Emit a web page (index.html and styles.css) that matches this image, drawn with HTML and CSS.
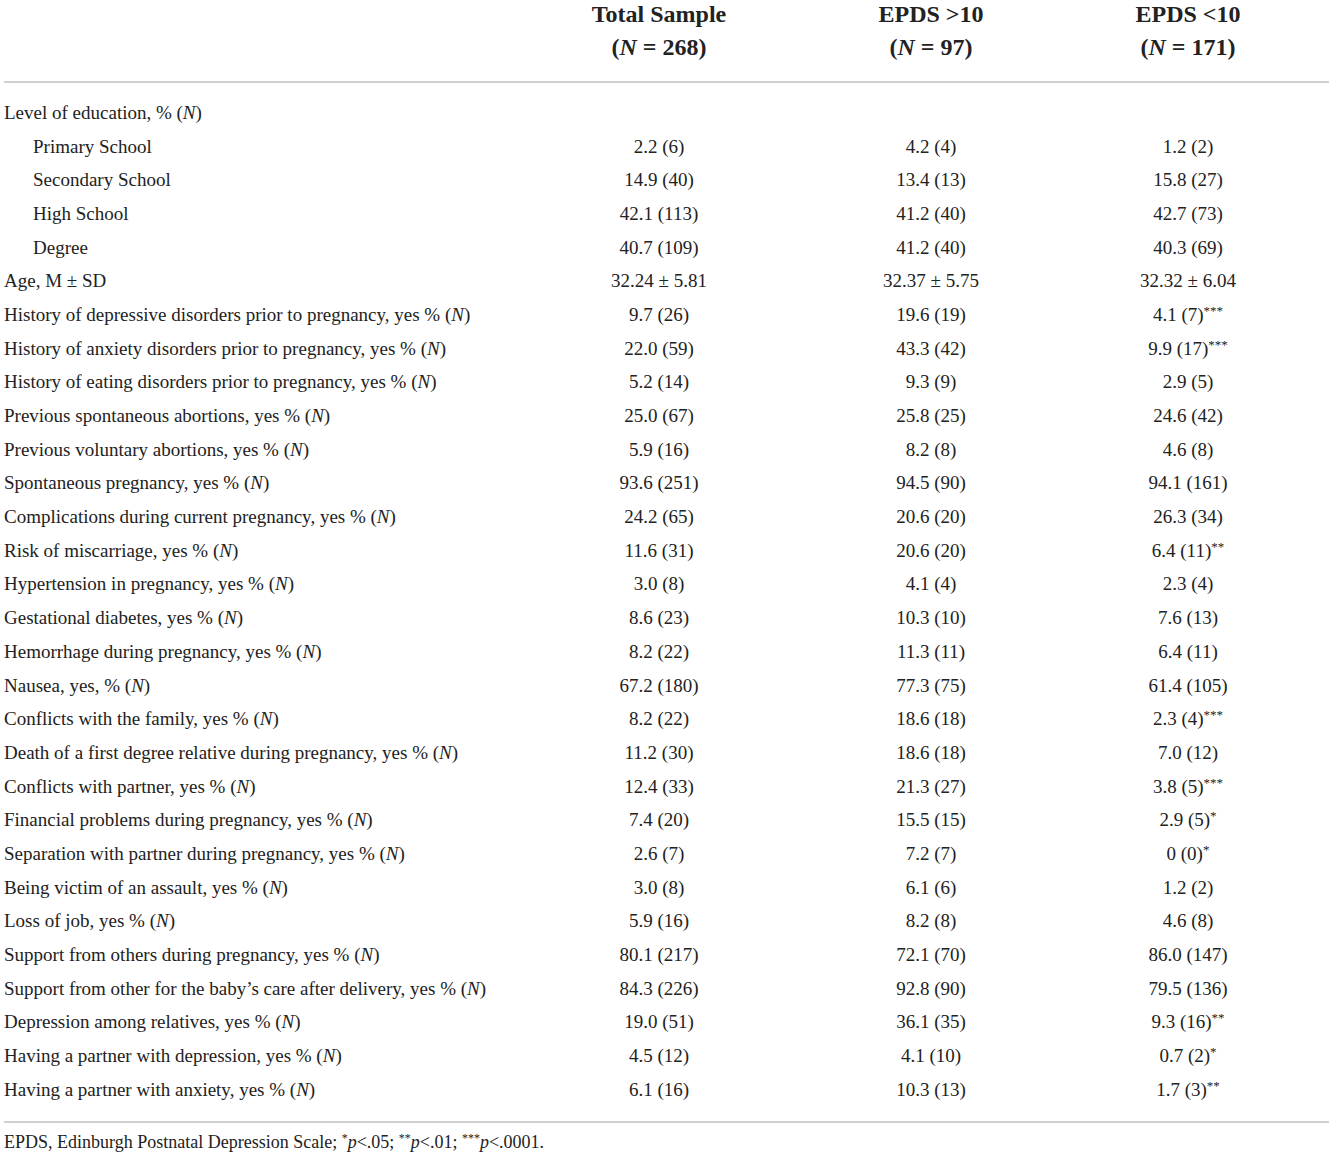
FILE: index.html
```html
<!DOCTYPE html>
<html lang="en">
<head>
  <meta charset="UTF-8">
  <title>Sample characteristics</title>
  <link rel="stylesheet" href="styles.css">
</head>
<body>
  <table class="data-table">
    <colgroup>
      <col class="col-label">
      <col class="col-total">
      <col class="col-high">
      <col class="col-low">
    </colgroup>
    <thead>
      <tr>
        <th></th>
        <th>Total Sample<br>(<i>N</i> = 268)</th>
        <th>EPDS &gt;10<br>(<i>N</i> = 97)</th>
        <th>EPDS &lt;10<br>(<i>N</i> = 171)</th>
      </tr>
    </thead>
    <tbody>
      <tr><td>Level of education, % (<i>N</i>)</td><td></td><td></td><td></td></tr>
      <tr><td class="indent">Primary School</td><td>2.2 (6)</td><td>4.2 (4)</td><td>1.2 (2)</td></tr>
      <tr><td class="indent">Secondary School</td><td>14.9 (40)</td><td>13.4 (13)</td><td>15.8 (27)</td></tr>
      <tr><td class="indent">High School</td><td>42.1 (113)</td><td>41.2 (40)</td><td>42.7 (73)</td></tr>
      <tr><td class="indent">Degree</td><td>40.7 (109)</td><td>41.2 (40)</td><td>40.3 (69)</td></tr>
      <tr><td>Age, M ± SD</td><td>32.24 ± 5.81</td><td>32.37 ± 5.75</td><td>32.32 ± 6.04</td></tr>
      <tr><td>History of depressive disorders prior to pregnancy, yes % (<i>N</i>)</td><td>9.7 (26)</td><td>19.6 (19)</td><td>4.1 (7)<sup>***</sup></td></tr>
      <tr><td>History of anxiety disorders prior to pregnancy, yes % (<i>N</i>)</td><td>22.0 (59)</td><td>43.3 (42)</td><td>9.9 (17)<sup>***</sup></td></tr>
      <tr><td>History of eating disorders prior to pregnancy, yes % (<i>N</i>)</td><td>5.2 (14)</td><td>9.3 (9)</td><td>2.9 (5)</td></tr>
      <tr><td>Previous spontaneous abortions, yes % (<i>N</i>)</td><td>25.0 (67)</td><td>25.8 (25)</td><td>24.6 (42)</td></tr>
      <tr><td>Previous voluntary abortions, yes % (<i>N</i>)</td><td>5.9 (16)</td><td>8.2 (8)</td><td>4.6 (8)</td></tr>
      <tr><td>Spontaneous pregnancy, yes % (<i>N</i>)</td><td>93.6 (251)</td><td>94.5 (90)</td><td>94.1 (161)</td></tr>
      <tr><td>Complications during current pregnancy, yes % (<i>N</i>)</td><td>24.2 (65)</td><td>20.6 (20)</td><td>26.3 (34)</td></tr>
      <tr><td>Risk of miscarriage, yes % (<i>N</i>)</td><td>11.6 (31)</td><td>20.6 (20)</td><td>6.4 (11)<sup>**</sup></td></tr>
      <tr><td>Hypertension in pregnancy, yes % (<i>N</i>)</td><td>3.0 (8)</td><td>4.1 (4)</td><td>2.3 (4)</td></tr>
      <tr><td>Gestational diabetes, yes % (<i>N</i>)</td><td>8.6 (23)</td><td>10.3 (10)</td><td>7.6 (13)</td></tr>
      <tr><td>Hemorrhage during pregnancy, yes % (<i>N</i>)</td><td>8.2 (22)</td><td>11.3 (11)</td><td>6.4 (11)</td></tr>
      <tr><td>Nausea, yes, % (<i>N</i>)</td><td>67.2 (180)</td><td>77.3 (75)</td><td>61.4 (105)</td></tr>
      <tr><td>Conflicts with the family, yes % (<i>N</i>)</td><td>8.2 (22)</td><td>18.6 (18)</td><td>2.3 (4)<sup>***</sup></td></tr>
      <tr><td>Death of a first degree relative during pregnancy, yes % (<i>N</i>)</td><td>11.2 (30)</td><td>18.6 (18)</td><td>7.0 (12)</td></tr>
      <tr><td>Conflicts with partner, yes % (<i>N</i>)</td><td>12.4 (33)</td><td>21.3 (27)</td><td>3.8 (5)<sup>***</sup></td></tr>
      <tr><td>Financial problems during pregnancy, yes % (<i>N</i>)</td><td>7.4 (20)</td><td>15.5 (15)</td><td>2.9 (5)<sup>*</sup></td></tr>
      <tr><td>Separation with partner during pregnancy, yes % (<i>N</i>)</td><td>2.6 (7)</td><td>7.2 (7)</td><td>0 (0)<sup>*</sup></td></tr>
      <tr><td>Being victim of an assault, yes % (<i>N</i>)</td><td>3.0 (8)</td><td>6.1 (6)</td><td>1.2 (2)</td></tr>
      <tr><td>Loss of job, yes % (<i>N</i>)</td><td>5.9 (16)</td><td>8.2 (8)</td><td>4.6 (8)</td></tr>
      <tr><td>Support from others during pregnancy, yes % (<i>N</i>)</td><td>80.1 (217)</td><td>72.1 (70)</td><td>86.0 (147)</td></tr>
      <tr><td>Support from other for the baby’s care after delivery, yes % (<i>N</i>)</td><td>84.3 (226)</td><td>92.8 (90)</td><td>79.5 (136)</td></tr>
      <tr><td>Depression among relatives, yes % (<i>N</i>)</td><td>19.0 (51)</td><td>36.1 (35)</td><td>9.3 (16)<sup>**</sup></td></tr>
      <tr><td>Having a partner with depression, yes % (<i>N</i>)</td><td>4.5 (12)</td><td>4.1 (10)</td><td>0.7 (2)<sup>*</sup></td></tr>
      <tr><td>Having a partner with anxiety, yes % (<i>N</i>)</td><td>6.1 (16)</td><td>10.3 (13)</td><td>1.7 (3)<sup>**</sup></td></tr>
    </tbody>
  </table>
  <p class="table-note">EPDS, Edinburgh Postnatal Depression Scale; <sup>*</sup><i>p</i>&lt;.05; <sup>**</sup><i>p</i>&lt;.01; <sup>***</sup><i>p</i>&lt;.0001.</p>
</body>
</html>
```

FILE: styles.css
```css
body {
  margin: 0;
  padding: 0 5px 0 4px;
  font-family: "Liberation Serif", "DejaVu Serif", serif;
  color: #222;
  background: #fff;
}
.data-table {
  width: 1325px;
  margin-top: -2px;
  border-collapse: collapse;
  table-layout: fixed;
  font-size: 19px;
}
.col-label { width: 499px; }
.col-total { width: 312px; }
.col-high { width: 232px; }
.col-low { width: 282px; }
.data-table th {
  font-size: 24px;
  font-weight: bold;
  line-height: 33px;
  padding: 0 0 17px;
  text-align: center;
  border-bottom: 2px solid #d0d0d0;
}
.data-table td {
  height: 33.7px;
  padding: 0;
  text-align: center;
  white-space: nowrap;
}
.data-table td:first-child { text-align: left; }
.data-table td.indent { padding-left: 29px; }
.data-table tbody tr:first-child td { padding-top: 13px; }
.data-table tbody tr:last-child td { padding-bottom: 14px; }
sup {
  font-size: 13px;
  line-height: 0;
  vertical-align: 6px;
}
.table-note {
  margin: 0;
  width: 1325px;
  border-top: 2px solid #d0d0d0;
  padding-top: 9px;
  font-size: 18px;
}
.table-note sup {
  font-size: 12px;
}
```
